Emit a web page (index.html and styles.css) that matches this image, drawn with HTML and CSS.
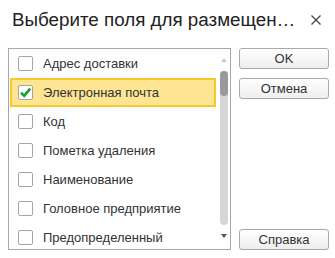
FILE: index.html
```html
<!DOCTYPE html>
<html>
<head>
<meta charset="utf-8">
<link rel="stylesheet" href="styles.css">
</head>
<body>
<div class="dialog">
  <div class="header">
    <div class="title">Выберите поля для размещен…</div>
    <svg class="close" width="12" height="12" viewBox="0 0 12 12"><path d="M1.5 1.5 L10.5 10.5 M10.5 1.5 L1.5 10.5" stroke="#444" stroke-width="1.3"/></svg>
  </div>
  <div class="body">
    <div class="list">
      <div class="rows">
        <div class="row"><span class="cb"></span><span class="label">Адрес доставки</span></div>
        <div class="row selected"><span class="cb"><svg width="13" height="13" viewBox="0 0 13 13"><path d="M2 6.6 L5.2 9.8 L11.2 2.6" fill="none" stroke="#17a12a" stroke-width="2.6"/></svg></span><span class="label">Электронная почта</span></div>
        <div class="row"><span class="cb"></span><span class="label">Код</span></div>
        <div class="row"><span class="cb"></span><span class="label">Пометка удаления</span></div>
        <div class="row"><span class="cb"></span><span class="label">Наименование</span></div>
        <div class="row"><span class="cb"></span><span class="label">Головное предприятие</span></div>
        <div class="row"><span class="cb"></span><span class="label">Предопределенный</span></div>
      </div>
      <div class="scroll">
        <span class="arrow up"></span>
        <div class="track"><div class="thumb"></div></div>
        <span class="arrow down"></span>
      </div>
    </div>
    <div class="buttons">
      <div class="btn">OK</div>
      <div class="btn">Отмена</div>
      <div class="spacer"></div>
      <div class="btn">Справка</div>
    </div>
  </div>
</div>
</body>
</html>
```

FILE: styles.css
```css
html, body {
  margin: 0;
  padding: 0;
  background: #fff;
}
.dialog {
  width: 335px;
  height: 258px;
  font-family: "Liberation Sans", Arial, sans-serif;
  color: #333;
}
.header {
  height: 48px;
  display: flex;
  align-items: flex-start;
  justify-content: space-between;
  padding: 0 13px 0 12px;
  box-sizing: border-box;
}
.title {
  font-size: 18.8px;
  line-height: 20px;
  margin-top: 10px;
  color: #222;
  white-space: nowrap;
}
.close {
  margin-top: 14px;
}
.body {
  display: flex;
  padding-left: 8px;
  gap: 8px;
}
.list {
  width: 223px;
  height: 202px;
  box-sizing: border-box;
  border: 1px solid #a8a8a8;
  display: flex;
  overflow: hidden;
}
.rows {
  width: 206px;
  display: flex;
  flex-direction: column;
  flex-shrink: 0;
  padding-left: 1px;
}
.row {
  height: 29px;
  flex-shrink: 0;
  display: flex;
  align-items: center;
  box-sizing: border-box;
  padding-left: 8px;
  font-size: 13px;
  color: #333;
}
.row.selected {
  background: #fde593;
  border: 2px solid #f8c824;
  padding-left: 6px;
}
.cb {
  width: 15px;
  height: 15px;
  box-sizing: border-box;
  border: 1px solid #a5a5a5;
  border-radius: 2px;
  background: #fff;
  display: flex;
  align-items: center;
  justify-content: center;
  flex-shrink: 0;
}
.label {
  margin-left: 10px;
  white-space: nowrap;
}
.scroll {
  flex: 1;
  display: flex;
  flex-direction: column;
  align-items: center;
  padding-left: 1px;
}
.arrow {
  width: 0;
  height: 0;
  border-left: 3px solid transparent;
  border-right: 3px solid transparent;
}
.arrow.up {
  margin-top: 9px;
  border-bottom: 4px solid #c8c8c8;
}
.arrow.down {
  margin-top: 9px;
  border-top: 4px solid #555;
}
.track {
  margin-top: 9px;
  width: 8px;
  height: 154px;
  background: #d6d6d6;
  border-radius: 4px;
}
.thumb {
  width: 8px;
  height: 25px;
  background: #999;
  border-radius: 4px;
}
.buttons {
  width: 90px;
  height: 202px;
  display: flex;
  flex-direction: column;
  gap: 9px;
}
.spacer {
  flex: 1;
}
.btn {
  height: 21px;
  box-sizing: border-box;
  border: 1px solid #a9a9a9;
  border-radius: 3px;
  background: linear-gradient(#ffffff, #eeeeee);
  font-size: 13px;
  color: #333;
  display: flex;
  align-items: center;
  justify-content: center;
}
.buttons .spacer + .btn {
  margin-top: -9px;
}
```
